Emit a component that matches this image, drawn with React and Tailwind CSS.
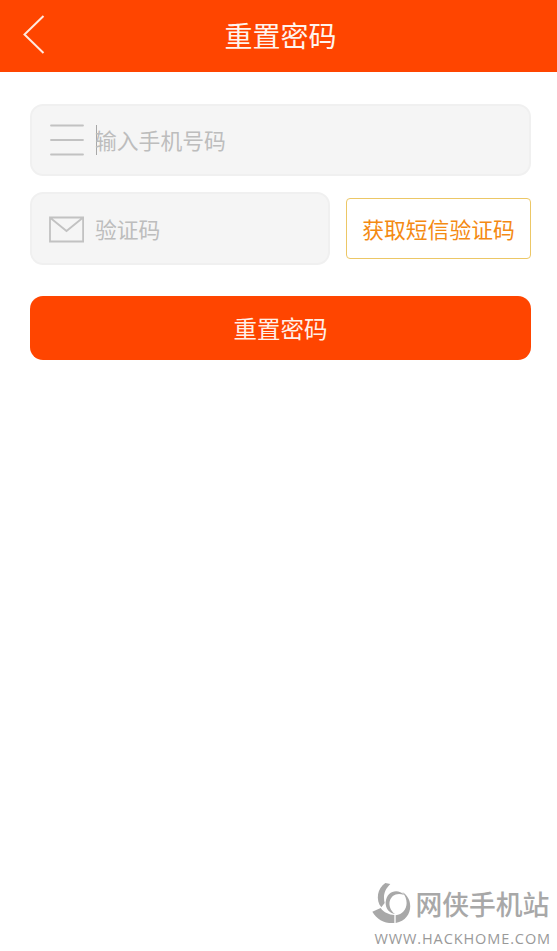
function BackIcon() {
  return (
    <svg className="h-10 w-6" viewBox="0 0 24 40" fill="none" stroke="#ffe9df" strokeWidth="2">
      <path d="M21.5 1 L2.5 19.5 L21.5 38" />
    </svg>
  );
}

function LinesIcon() {
  return (
    <svg className="h-9 w-9 shrink-0" viewBox="0 0 36 36" stroke="#c2c2c2" strokeWidth="1.8" strokeLinecap="round">
      <path d="M3 3.5 H35 M3 18 H35 M3 32.5 H35" />
    </svg>
  );
}

function MailIcon() {
  return (
    <svg className="h-9 w-9 shrink-0" viewBox="0 0 36 36" fill="none" stroke="#c2c2c2" strokeWidth="1.8">
      <path d="M2 6.5 H35.1 V30.5 H2 Z M2.5 7 L18.5 20 L34.5 7" />
    </svg>
  );
}

function SiteLogo() {
  return (
    <svg className="h-[42px] w-[39px] shrink-0" viewBox="10 12 117 126" fill="#a8a8a8">
      <path d="M50 15 L65 18 C51 32 46 44 46 60 C46 66 47 71 48 75 L38 88 C20 66 26 30 50 15 Z" />
      <path d="M11 101 L36 90 C46 104 61 110 77 111 V135 C48 137 24 124 11 101 Z" />
      <path d="M81 135 V112 C112 108 126 73 101 42 C138 64 132 126 81 135 Z" />
      <path d="M107 51 C88 31 54 38 51 73 C50 92 62 106 79 108 C46 82 66 35 107 51 Z" />
    </svg>
  );
}

export default function App() {
  return (
    <div className="flex h-[951px] w-[557px] flex-col overflow-hidden bg-white font-['Noto_Sans_CJK_SC',sans-serif]">
      <header className="grid h-[72px] shrink-0 grid-cols-[1fr_auto_1fr] items-center bg-[#ff4500] pr-[18px] pb-[3px] pl-[22px]">
        <button type="button">
          <BackIcon />
        </button>
        <h1 className="text-[28px] leading-none text-[#fff4ee]">重置密码</h1>
      </header>

      <main className="flex grow flex-col pt-8 pr-[26px] pl-[30px]">
        <div className="flex h-[72px] items-center rounded-[13px] border-2 border-[#f0f0f0] bg-[#f5f5f5] pl-4">
          <LinesIcon />
          <span className="ml-3 h-[30px] w-px bg-[#a8a8a8]" />
          <span className="-ml-0.5 text-[21.8px] leading-none text-[#bdbdbd]">输入手机号码</span>
        </div>

        <div className="mt-4 flex items-center justify-between">
          <div className="flex h-[73px] w-[300px] items-center rounded-[13px] border-2 border-[#f0f0f0] bg-[#f5f5f5] pl-4">
            <MailIcon />
            <span className="ml-[11px] text-[21.8px] leading-none text-[#bdbdbd]">验证码</span>
          </div>
          <button
            type="button"
            className="h-[61px] w-[185px] rounded border border-[#ecc766] text-[21.8px] leading-none text-[#f48a13]"
          >
            获取短信验证码
          </button>
        </div>

        <button
          type="button"
          className="mt-[31px] h-16 rounded-[13px] bg-[#ff4500] pt-0.5 text-[23.5px] leading-none text-[#fff0e8]"
        >
          重置密码
        </button>
      </main>

      <footer className="flex flex-col self-end pr-[6px] pb-[5px]">
        <div className="flex items-center">
          <SiteLogo />
          <span className="ml-1 pt-[3px] text-[26.8px] leading-none font-medium text-[#a8a8a8]">网侠手机站</span>
        </div>
        <span className="mt-2 ml-0.5 font-['Open_Sans',sans-serif] text-[14.5px] leading-none tracking-[0.9px] text-[#999]">
          WWW.HACKHOME.COM
        </span>
      </footer>
    </div>
  );
}
